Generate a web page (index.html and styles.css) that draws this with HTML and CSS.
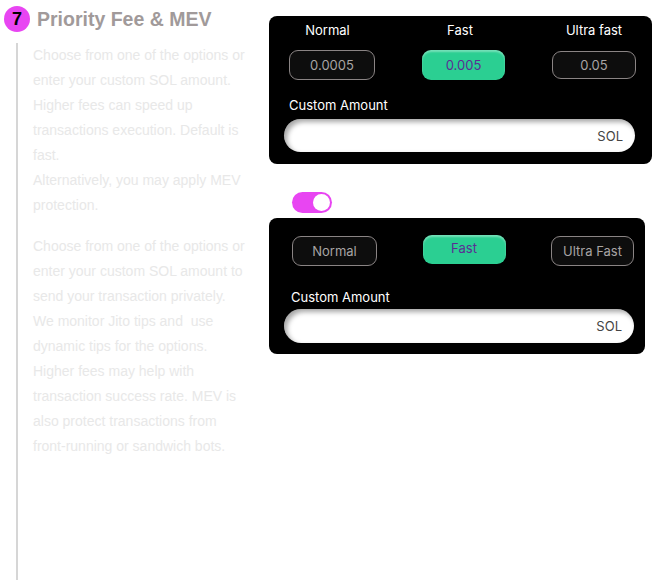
FILE: index.html
```html
<!DOCTYPE html>
<html lang="en">
<head>
    <meta charset="UTF-8">
    <title>Priority Fee &amp; MEV</title>
    <link rel="stylesheet" href="styles.css">
</head>
<body>
<div class="page">
    <div class="side">
        <div class="step-head">
            <span class="step-num">7</span>
            <h2 class="step-title">Priority Fee &amp; MEV</h2>
        </div>
        <div class="step-desc">
            <p>Choose from one of the options or enter your custom SOL amount. Higher fees can speed up transactions execution. Default is fast.<br>Alternatively, you may apply MEV protection.</p>
            <p>Choose from one of the options or enter your custom SOL amount to send your transaction privately. We monitor Jito tips and&nbsp; use dynamic tips for the options. Higher fees may help with transaction success rate. MEV is also protect transactions from front-running or sandwich bots.</p>
        </div>
    </div>

    <div class="main">
        <div class="panel fee-panel">
            <div class="options">
                <div class="option">
                    <span class="option-label">Normal</span>
                    <button class="chip">0.0005</button>
                </div>
                <div class="option">
                    <span class="option-label">Fast</span>
                    <button class="chip active">0.005</button>
                </div>
                <div class="option">
                    <span class="option-label">Ultra fast</span>
                    <button class="chip">0.05</button>
                </div>
            </div>
            <label class="amount-label">Custom Amount</label>
            <div class="amount-input">
                <input type="text">
                <span class="unit">SOL</span>
            </div>
        </div>

        <div class="toggle on"><span class="knob"></span></div>

        <div class="panel mev-panel">
            <div class="options">
                <button class="chip">Normal</button>
                <button class="chip active">Fast</button>
                <button class="chip">Ultra Fast</button>
            </div>
            <label class="amount-label">Custom Amount</label>
            <div class="amount-input">
                <input type="text">
                <span class="unit">SOL</span>
            </div>
        </div>
    </div>
</div>
</body>
</html>
```

FILE: styles.css
```css
body {
    margin: 0;
    background: #fff;
    font-family: "Liberation Sans", Arial, sans-serif;
}
.page {
    display: flex;
    align-items: flex-start;
}
.side {
    width: 269px;
    flex-shrink: 0;
}
.step-head {
    display: flex;
    align-items: center;
    padding: 6px 0 0 4px;
}
.step-num {
    width: 26px;
    height: 26px;
    border-radius: 50%;
    background: #e845f2;
    color: #000;
    font-weight: bold;
    font-size: 18px;
    display: flex;
    align-items: center;
    justify-content: center;
}
.step-title {
    margin: 0 0 0 7px;
    font-size: 19.5px;
    color: #a19a9a;
    font-weight: bold;
}
.step-desc {
    margin: 11px 0 0 16px;
    border-left: 2px solid #d6d6d6;
    padding: 0 0 0 15px;
    min-height: 537px;
    width: 215px;
}
.step-desc p {
    margin: 0 0 16px;
    font-size: 14px;
    line-height: 25px;
    color: #e8e8e8;
}

.main {
    width: 383px;
    padding-top: 16px;
    font-family: "Inter", sans-serif;
}
.panel {
    background: #000;
    border-radius: 8px;
}
.fee-panel {
    padding: 5px 17px 12px 15px;
}
.mev-panel {
    width: 350px;
    padding: 18px 11px 11px 15px;
}
.options {
    display: flex;
    justify-content: space-between;
    padding-left: 5px;
}
.fee-panel .options {
    margin-right: -1px;
}
.mev-panel .options {
    padding-left: 8px;
}
.option {
    display: flex;
    flex-direction: column;
    align-items: center;
}
.option-label {
    color: #fff;
    font-size: 13px;
    line-height: 18px;
    margin-bottom: 11px;
}
.option:first-child .option-label {
    margin-right: 9px;
}
.option:nth-child(2) .option-label {
    margin-right: 7px;
}
.chip {
    width: 86px;
    height: 30px;
    border: 1px solid #8a8484;
    border-radius: 9px;
    background: #0d0d0d;
    color: #a8a4a4;
    font-family: "Inter", sans-serif;
    font-size: 13px;
    padding: 0;
}
.option:last-child .chip {
    width: 84px;
    height: 28px;
    margin-top: 1px;
}
.chip.active {
    width: 83px;
    border: none;
    background: #2bcf92;
    color: #5a2e94;
    box-shadow: inset 0 2px 2px rgba(255,255,255,0.35);
}
.mev-panel .chip {
    width: 85px;
}
.mev-panel .chip:last-child {
    width: 83px;
}
.mev-panel .chip.active {
    width: 83px;
    height: 29px;
    margin-top: -1px;
    padding-bottom: 3px;
}
.amount-label {
    display: block;
    color: #fff;
    font-size: 13px;
    line-height: 18px;
    margin: 16px 0 5px 5px;
}
.mev-panel .amount-label {
    margin: 22px 0 3px 7px;
}
.amount-input {
    display: flex;
    align-items: center;
    height: 33px;
    background: #fff;
    border-radius: 17px;
    box-shadow: inset 3px 3px 5px rgba(0,0,0,0.35);
    padding: 0 12px 0 16px;
}
.mev-panel .amount-input {
    height: 34px;
}
.amount-input input {
    flex: 1;
    border: none;
    background: transparent;
    outline: none;
    min-width: 0;
}
.unit {
    font-size: 13px;
    color: #444;
}

.toggle {
    width: 40px;
    height: 21px;
    margin: 28px 0 5px 23px;
    border-radius: 11px;
    background: #e845f2;
    display: flex;
    align-items: center;
    justify-content: flex-end;
    padding: 0 2px;
    box-sizing: border-box;
}
.knob {
    width: 17px;
    height: 17px;
    border-radius: 50%;
    background: #fff;
}
```
